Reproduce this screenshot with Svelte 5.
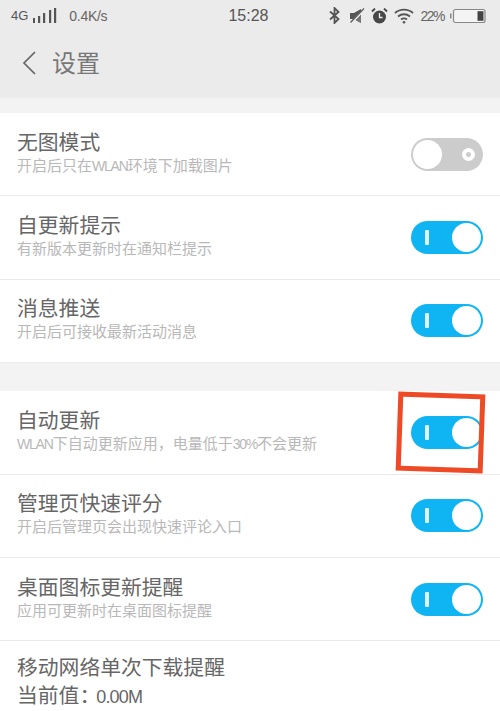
<script>
  // settings rows, grouped the way the screen groups them
  const groups = [
    [
      { title: '无图模式', sub: '开启后只在WLAN环境下加载图片', on: false },
      { title: '自更新提示', sub: '有新版本更新时在通知栏提示', on: true },
      { title: '消息推送', sub: '开启后可接收最新活动消息', on: true },
    ],
    [
      { title: '自动更新', sub: 'WLAN下自动更新应用，电量低于30%不会更新', on: true, marked: true },
      { title: '管理页快速评分', sub: '开启后管理页会出现快速评论入口', on: true },
      { title: '桌面图标更新提醒', sub: '应用可更新时在桌面图标提醒', on: true },
    ],
  ]

  // latin runs are set tighter than the CJK around them
  const parts = (text) => text.split(/([A-Za-z0-9%]+)/).filter(Boolean)
  const isLatin = (part) => /^[A-Za-z0-9%]+$/.test(part)
</script>

<div class="page">
  <header class="top">
    <div class="status">
      <div class="left">
        <span class="net">4G</span>
        <svg class="bars" width="24" height="16" viewBox="0 0 24 16">
          <rect x="0" y="10" width="2" height="5" />
          <rect x="5" y="8" width="2.200" height="7" />
          <rect x="10" y="5" width="2.200" height="10" />
          <rect x="16" y="2" width="2.200" height="13" />
          <rect x="21" y="0" width="2.200" height="15" />
        </svg>
        <span class="speed">0.4K/s</span>
      </div>
      <span class="clock">15:28</span>
      <div class="right">
        <svg width="11" height="17" viewBox="0 0 11 17" fill="none" stroke="#555" stroke-width="1.800">
          <path d="M1 4.500l8.500 7.500-4 4V1l4 4L1 12.500" />
        </svg>
        <svg class="mute" width="16" height="16" viewBox="0 0 16 16">
          <path d="M1 5h4l7-4v14l-7-4H1z" fill="#555" />
          <path d="M1 16L16 1" stroke="#eee" stroke-width="2.600" />
          <path d="M7 12.500L12 7.500v7.500z" fill="#777" />
          <path d="M1.500 14.500L15 .5" stroke="#555" stroke-width="1.200" />
        </svg>
        <svg class="alarm" width="17" height="16" viewBox="0 0 17 16">
          <circle cx="8.500" cy="9" r="6.500" fill="#484848" />
          <path d="M8.500 5v4.500h3" fill="none" stroke="#eee" stroke-width="1.300" />
          <path d="M1 3.500l3-3M16 3.500l-3-3" stroke="#484848" stroke-width="1.800" />
        </svg>
        <svg class="wifi" width="20" height="16" viewBox="0 0 20 16" fill="none" stroke="#555" stroke-width="1.800">
          <path d="M1 5c5-4.500 13-4.500 18 0" />
          <path d="M4 8.500c3.500-3 8.500-3 12 0" />
          <path d="M7 11.500c2-1.500 4-1.500 6 0" />
          <circle cx="10" cy="14.300" r="1.300" fill="#555" stroke="none" />
        </svg>
        <span class="pct">22%</span>
        <svg width="36" height="16" viewBox="0 0 36 16">
          <rect x="0" y="5.500" width="1.500" height="5" fill="#888" />
          <rect x="3.500" y="1.500" width="31.500" height="13" rx="2" fill="#f4f4f4" stroke="#888" stroke-width="1.200" />
          <rect x="27.500" y="3.200" width="6" height="9.600" fill="#444" />
        </svg>
      </div>
    </div>
    <div class="title-bar">
      <svg class="back" width="14" height="24" viewBox="0 0 14 24" fill="none" stroke="#666" stroke-width="1.700">
        <path d="M13 1L2 12l11 11" />
      </svg>
      <span class="page-title">设置</span>
    </div>
  </header>

  {#each groups as group}
    <section class="group">
      {#each group as row}
        <div class="row">
          <div class="text">
            <div class="title">{row.title}</div>
            <div class="sub">
              {#each parts(row.sub) as part}{#if isLatin(part)}<span class="latin">{part}</span>{:else}{part}{/if}{/each}
            </div>
          </div>
          <div class="switch" class:on={row.on}>
            {#if row.on}
              <span class="bar"></span>
              <span class="knob"></span>
            {:else}
              <span class="knob"></span>
              <span class="dot"></span>
            {/if}
          </div>
          {#if row.marked}
            <div class="mark"></div>
          {/if}
        </div>
      {/each}
    </section>
  {/each}

  <div class="last">
    <div class="title">移动网络单次下载提醒</div>
    <div class="value">当前值：<span class="amount">0.00M</span></div>
  </div>
</div>

<style>
  :global(body) {
    margin: 0;
    background: #fff;
  }

  .page {
    width: 500px;
    height: 711px;
    overflow: hidden;
    font-family: "Liberation Sans", "Noto Sans CJK SC", sans-serif;
    background: #f3f3f3;
  }

  .top {
    background: #ebebeb;
    height: 98px;
  }

  .status {
    height: 31px;
    padding: 0 14px 0 11px;
    display: grid;
    grid-template-columns: 1fr auto 1fr;
    align-items: center;
    color: #555;
  }

  .left, .right {
    display: flex;
    align-items: center;
  }

  .right {
    justify-content: flex-end;
    gap: 6px;
  }

  .net {
    font-size: 13px;
    margin-right: 5px;
  }

  .bars {
    fill: #555;
    margin-right: 12px;
  }

  .speed {
    font-size: 14px;
    letter-spacing: -0.300px;
    color: #666;
  }

  .clock {
    font-size: 16px;
    color: #555;
  }

  .mute {
    margin-left: 3px;
  }

  .pct {
    font-size: 14px;
    letter-spacing: -1.500px;
    color: #666;
  }

  .title-bar {
    height: 64px;
    display: flex;
    align-items: center;
    padding-left: 22px;
  }

  .back {
    margin-right: 16px;
  }

  .page-title {
    font-size: 24px;
    color: #777;
    margin-bottom: 4px;
    font-family: "Noto Sans CJK SC", sans-serif;
  }

  .group {
    margin-top: 15px;
    background: #fff;
  }

  .group + .group {
    margin-top: 28px;
  }

  .row {
    position: relative;
    height: 83.400px;
    box-sizing: border-box;
    padding: 0 17px 0 17px;
    display: flex;
    align-items: center;
    justify-content: space-between;
    border-bottom: 1px solid #eaeaea;
  }

  .text {
    margin-top: -4px;
  }

  .title {
    font-size: 20.800px;
    line-height: 27px;
    color: #666;
  }

  .sub {
    font-size: 15px;
    line-height: 20px;
    color: #b8b8b8;
  }

  .latin {
    font-size: 14px;
    letter-spacing: -1.200px;
  }

  .switch {
    position: relative;
    width: 72px;
    height: 33px;
    border-radius: 17px;
    background: #cccccc;
    flex: none;
  }

  .switch.on {
    background: #0fb5f2;
  }

  .knob {
    position: absolute;
    top: 2px;
    left: 2px;
    width: 29px;
    height: 29px;
    border-radius: 50%;
    background: #fff;
  }

  .switch.on .knob {
    left: auto;
    right: 2px;
  }

  .bar {
    position: absolute;
    left: 14px;
    top: 9px;
    width: 4px;
    height: 15px;
    border-radius: 1px;
    background: #dcf5ff;
  }

  .dot {
    position: absolute;
    right: 8px;
    top: 10px;
    width: 5px;
    height: 5px;
    border: 4px solid #fff;
    border-radius: 50%;
    background: #ccc;
  }

  .mark {
    position: absolute;
    left: 397px;
    top: 2px;
    width: 87px;
    height: 79px;
    box-sizing: border-box;
    border: 5px solid #ee4a26;
    transform: rotate(2deg);
  }

  .last {
    background: #fff;
    height: 80px;
    padding: 13px 17px 0;
  }

  .value {
    font-size: 20.800px;
    line-height: 30px;
    color: #666;
  }

  .amount {
    font-size: 18px;
    letter-spacing: -0.800px;
    margin-left: -4px;
  }
</style>
